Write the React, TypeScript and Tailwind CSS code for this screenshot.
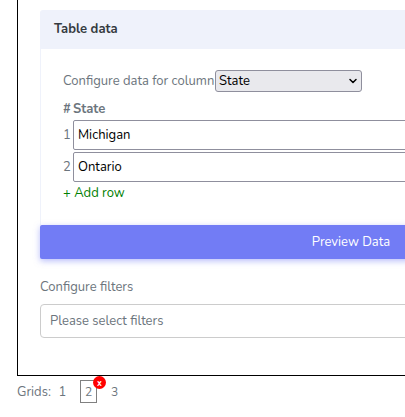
import { useState } from "react";
import { ChevronDown } from "lucide-react";

const initialRows = ["Michigan", "Ontario"];

function TableDataCard() {
  const [rows, setRows] = useState(initialRows);

  return (
    <section>
      <h2 className="h-[39px] rounded-t-[3px] bg-[#eff2fb] px-3.5 text-[13px] leading-[38px] font-bold text-[#343a40]">
        Table data
      </h2>
      <div className="h-44 border-x border-[#eff2fb] px-[22px] pt-[21px]">
        <div className="flex items-center">
          <label htmlFor="column" className="w-[152px] whitespace-nowrap">
            Configure data for column
          </label>
          <div className="relative h-[22px] w-[147px]">
            <select
              id="column"
              className="h-full w-full appearance-none rounded-[3px] border border-[#8f8f9d] bg-[#e9e9ed] px-[3px] leading-5 text-black"
            >
              <option>State</option>
            </select>
            <ChevronDown
              className="pointer-events-none absolute top-[5px] right-[3px] size-3 text-black"
              strokeWidth={3}
            />
          </div>
        </div>
        <table className="mt-1.5 w-full border-collapse">
          <thead>
            <tr className="h-[21px] text-left font-bold">
              <th className="w-2.5">#</th>
              <th>State</th>
            </tr>
          </thead>
          <tbody>
            {rows.map((row, index) => (
              <tr key={index}>
                <td className="p-0">{index + 1}</td>
                <td className="pt-px pb-px">
                  <input
                    aria-label={`State ${index + 1}`}
                    defaultValue={row}
                    className="block h-[30px] w-full rounded-[2px] border border-[#8f8f9d] bg-white px-1 text-black"
                  />
                </td>
              </tr>
            ))}
          </tbody>
        </table>
        <button
          type="button"
          onClick={() => setRows([...rows, ""])}
          className="block leading-5 text-[#008000]"
        >
          + Add row
        </button>
      </div>
      <button
        type="button"
        className="block h-[34px] w-full rounded-[2px] bg-[#727cf5] text-center text-white shadow-[0_2px_6px_0_rgba(114,124,245,0.5)]"
      >
        Preview Data
      </button>
    </section>
  );
}

export default function App() {
  return (
    <main className="overflow-hidden bg-white pl-[17px] font-['Nunito','Open_Sans',sans-serif] text-[13px] leading-5 text-[#6c757d]">
      <div className="min-w-[668px] border-x border-b border-black px-[22px] pt-2.5 pb-[37px]">
        <TableDataCard />
        <label htmlFor="filters" className="mt-[18px] block">
          Configure filters
        </label>
        <input
          id="filters"
          placeholder="Please select filters"
          className="mt-[7px] block h-[34px] w-full rounded border border-[#cccccc] bg-white px-[9px] text-[#6c757d] placeholder:text-[#6c757d]"
        />
      </div>
      <nav aria-label="Grids" className="flex h-[31px] items-center">
        <span className="w-[41px]">Grids:</span>
        <button type="button" className="w-[9px]">
          1
        </button>
        <div className="relative ml-[13px]">
          <button
            type="button"
            className="block h-[23px] w-[17px] border border-[#808080] text-[12px]"
          >
            2
          </button>
          <button
            type="button"
            aria-label="Remove grid 2"
            className="absolute -top-1 -right-[9px] flex size-[13px] items-center justify-center rounded-full bg-[#ff0000] text-[9px] leading-3 font-bold text-white"
          >
            x
          </button>
        </div>
        <button type="button" className="ml-3.5 text-[12px]">
          3
        </button>
      </nav>
    </main>
  );
}
